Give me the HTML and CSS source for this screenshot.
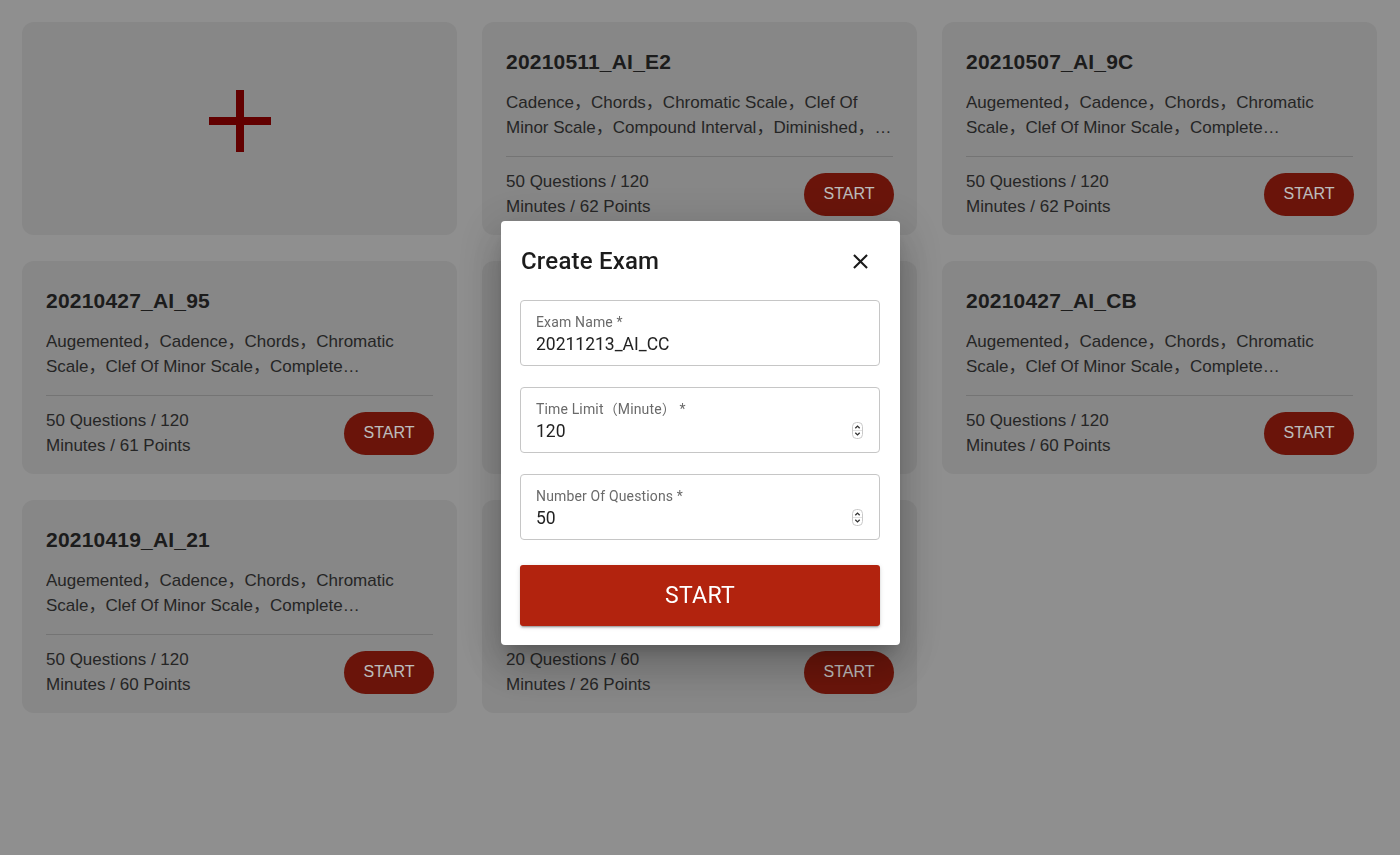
FILE: index.html
```html
<!DOCTYPE html>
<html lang="en">
<head>
<meta charset="utf-8">
<title>Exams</title>
<link rel="stylesheet" href="styles.css">
</head>
<body>
<main class="grid">
  <div class="card card-add">
    <svg class="plus" width="62" height="62" viewBox="0 0 62 62"><rect x="27" y="0" width="8" height="62"/><rect x="0" y="27" width="62" height="8"/></svg>
  </div>

  <div class="card">
    <h2 class="title">20210511_AI_E2</h2>
    <div class="tags-wrap tags-wrap-wide"><p class="tags">Cadence，Chords，Chromatic Scale，Clef Of Minor Scale，Compound Interval，Diminished，Dominant Seventh，Enharmonic</p></div>
    <div class="footer">
      <p class="meta">50 Questions / 120 Minutes / 62 Points</p>
      <button class="start">START</button>
    </div>
  </div>

  <div class="card">
    <h2 class="title">20210507_AI_9C</h2>
    <div class="tags-wrap"><p class="tags">Augemented，Cadence，Chords，Chromatic Scale，Clef Of Minor Scale，Complete Cadence，Diminished</p></div>
    <div class="footer">
      <p class="meta">50 Questions / 120 Minutes / 62 Points</p>
      <button class="start">START</button>
    </div>
  </div>

  <div class="card">
    <h2 class="title">20210427_AI_95</h2>
    <div class="tags-wrap"><p class="tags">Augemented，Cadence，Chords，Chromatic Scale，Clef Of Minor Scale，Complete Cadence，Diminished</p></div>
    <div class="footer">
      <p class="meta">50 Questions / 120 Minutes / 61 Points</p>
      <button class="start">START</button>
    </div>
  </div>

  <div class="card">
    <h2 class="title">20210427_AI_A3</h2>
    <div class="tags-wrap"><p class="tags">Augemented，Cadence，Chords，Chromatic Scale，Clef Of Minor Scale，Complete Cadence，Diminished</p></div>
    <div class="footer">
      <p class="meta">50 Questions / 120 Minutes / 60 Points</p>
      <button class="start">START</button>
    </div>
  </div>

  <div class="card">
    <h2 class="title">20210427_AI_CB</h2>
    <div class="tags-wrap"><p class="tags">Augemented，Cadence，Chords，Chromatic Scale，Clef Of Minor Scale，Complete Cadence，Diminished</p></div>
    <div class="footer">
      <p class="meta">50 Questions / 120 Minutes / 60 Points</p>
      <button class="start">START</button>
    </div>
  </div>

  <div class="card">
    <h2 class="title">20210419_AI_21</h2>
    <div class="tags-wrap"><p class="tags">Augemented，Cadence，Chords，Chromatic Scale，Clef Of Minor Scale，Complete Cadence，Diminished</p></div>
    <div class="footer">
      <p class="meta">50 Questions / 120 Minutes / 60 Points</p>
      <button class="start">START</button>
    </div>
  </div>

  <div class="card">
    <h2 class="title">20210418_AI_7F</h2>
    <div class="tags-wrap"><p class="tags">Cadence，Chords，Chromatic Scale，Clef Of Minor Scale，Compound Interval，Diminished</p></div>
    <div class="footer">
      <p class="meta">20 Questions / 60 Minutes / 26 Points</p>
      <button class="start">START</button>
    </div>
  </div>
</main>

<div class="backdrop">
  <div class="dialog" role="dialog" aria-label="Create Exam">
    <div class="dialog-head">
      <h1 class="dialog-title">Create Exam</h1>
      <button class="close" aria-label="Close">
        <svg width="25" height="25" viewBox="0 0 24 24"><path d="M19 6.41 17.59 5 12 10.59 6.41 5 5 6.41 10.59 12 5 17.59 6.41 19 12 13.41 17.59 19 19 17.59 13.41 12z"/></svg>
      </button>
    </div>

    <div class="field">
      <span class="label">Exam Name *</span>
      <span class="value">20211213_AI_CC</span>
    </div>

    <div class="field">
      <span class="label">Time Limit（Minute） *</span>
      <span class="value">120</span>
      <svg class="spin" width="11" height="17" viewBox="0 0 11 17"><rect x="0.5" y="0.5" width="10" height="16" rx="4" fill="#fff" stroke="#c9c9c9"/><path d="M3.3 6.3 5.5 4.1 7.7 6.3" fill="none" stroke="#333" stroke-width="1.3"/><path d="M3.3 10.7 5.5 12.9 7.7 10.7" fill="none" stroke="#333" stroke-width="1.3"/><line x1="1" y1="8.5" x2="10" y2="8.5" stroke="#e2e2e2"/></svg>
    </div>

    <div class="field">
      <span class="label">Number Of Questions *</span>
      <span class="value">50</span>
      <svg class="spin" width="11" height="17" viewBox="0 0 11 17"><rect x="0.5" y="0.5" width="10" height="16" rx="4" fill="#fff" stroke="#c9c9c9"/><path d="M3.3 6.3 5.5 4.1 7.7 6.3" fill="none" stroke="#333" stroke-width="1.3"/><path d="M3.3 10.7 5.5 12.9 7.7 10.7" fill="none" stroke="#333" stroke-width="1.3"/><line x1="1" y1="8.5" x2="10" y2="8.5" stroke="#e2e2e2"/></svg>
    </div>

    <button class="submit">START</button>
  </div>
</div>
</body>
</html>
```

FILE: styles.css
```css
* { box-sizing: border-box; }

html, body {
  margin: 0;
  height: 100%;
}

body {
  background: #c1c1c1;
  font-family: "Liberation Sans", "Noto Sans CJK SC", Arial, sans-serif;
  color: #2b2b2b;
}

.grid {
  display: grid;
  grid-template-columns: repeat(3, 435px);
  grid-auto-rows: 213px;
  column-gap: 25px;
  row-gap: 26px;
  padding: 22px;
}

.card {
  background: #b6b6b6;
  border-radius: 12px;
  padding: 26px 24px 0;
  display: flex;
  flex-direction: column;
}

.card-add {
  align-items: center;
  justify-content: center;
  padding: 0 0 16px;
}

.plus { fill: #850000; display: block; }

.title {
  margin: 0;
  font-size: 21px;
  line-height: 28px;
  font-weight: 700;
  color: #262626;
  letter-spacing: 0.2px;
}

.tags-wrap {
  margin-top: 14px;
  padding: 0 4px 16px 0;
  border-bottom: 1px solid #9d9d9d;
}

.tags-wrap-wide { padding-right: 0; }

.tags {
  margin: 0;
  font-size: 17px;
  line-height: 25px;
  height: 50px;
  color: #333;
  display: -webkit-box;
  -webkit-box-orient: vertical;
  -webkit-line-clamp: 2;
  overflow: hidden;
}

.footer {
  display: flex;
  align-items: center;
  justify-content: space-between;
  padding-top: 12px;
}

.meta {
  margin: 0;
  max-width: 180px;
  font-size: 17px;
  line-height: 25px;
  color: #333;
}

.start {
  width: 90px;
  height: 43px;
  border: 0;
  border-radius: 22px;
  background: #8f1c0e;
  color: #fff;
  font-family: "Liberation Sans", Arial, sans-serif;
  font-size: 16px;
  padding: 0;
  margin-right: -1px;
}

.backdrop {
  position: fixed;
  inset: 0;
  background: rgba(0, 0, 0, 0.26);
  display: flex;
  align-items: center;
  justify-content: center;
  padding-top: 11px;
  padding-left: 1px;
}

.dialog {
  width: 399px;
  background: #fff;
  border-radius: 4px;
  padding: 24px 20px 19px 19px;
  box-shadow: 0 11px 15px -7px rgba(0,0,0,0.2), 0 24px 38px 3px rgba(0,0,0,0.14), 0 9px 46px 8px rgba(0,0,0,0.12);
  font-family: Roboto, "Noto Sans CJK SC", sans-serif;
}

.dialog-head {
  display: flex;
  align-items: center;
  justify-content: space-between;
  height: 32px;
  margin-bottom: 23px;
  padding-left: 1px;
}

.dialog-title {
  margin: 0;
  font-size: 24px;
  font-weight: 500;
  color: #1c1c1c;
  line-height: 32px;
  letter-spacing: 0.2px;
}

.close {
  width: 40px;
  height: 40px;
  border: 0;
  background: none;
  padding: 0;
  display: flex;
  align-items: center;
  justify-content: center;
}

.close svg { fill: #1a1a1a; }

.field {
  position: relative;
  height: 66px;
  border: 1px solid #c6c6c6;
  border-radius: 4px;
  padding: 11px 15px 0;
  margin-bottom: 21px;
  display: flex;
  flex-direction: column;
}

.label {
  font-size: 14px;
  line-height: 20px;
  color: #6a6a6a;
  letter-spacing: 0.15px;
}

.value {
  font-size: 17.5px;
  line-height: 24px;
  color: #222;
}

.spin {
  position: absolute;
  right: 16px;
  top: 34px;
}

.submit {
  display: block;
  width: 100%;
  height: 61px;
  margin-top: 25px;
  border: 0;
  border-radius: 3px;
  background: #b2230e;
  color: #fff;
  font-family: Roboto, sans-serif;
  font-size: 23px;
  letter-spacing: 0.3px;
  box-shadow: 0 3px 1px -2px rgba(0,0,0,0.2), 0 2px 2px 0 rgba(0,0,0,0.14), 0 1px 5px 0 rgba(0,0,0,0.12);
}
```
